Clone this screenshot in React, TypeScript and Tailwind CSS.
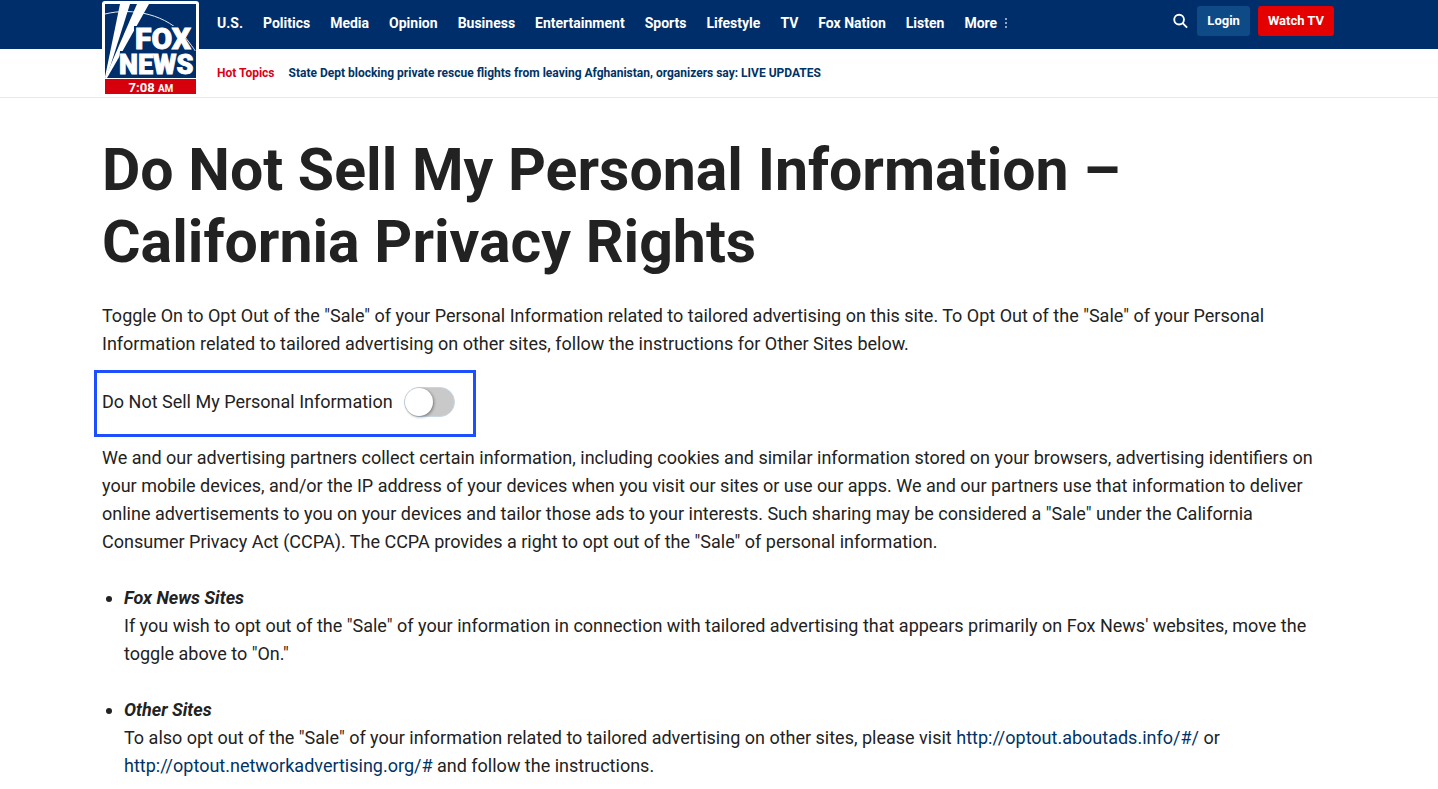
import { useState } from "react";

const NAV_LINKS = [
  "U.S.",
  "Politics",
  "Media",
  "Opinion",
  "Business",
  "Entertainment",
  "Sports",
  "Lifestyle",
  "TV",
  "Fox Nation",
  "Listen",
];

export default function App() {
  return (
    <div className="min-h-screen bg-white font-['Roboto',sans-serif] text-[#222]">
      <Header />
      <main className="mx-auto max-w-[1234px] pt-9">
        <h1 className="text-[59px] leading-[72px] font-bold">
          Do Not Sell My Personal Information – California Privacy Rights
        </h1>
        <div className="pt-6 text-lg leading-7">
          <p>
            Toggle On to Opt Out of the "Sale" of your Personal Information
            related to tailored advertising on this site. To Opt Out of the
            "Sale" of your Personal Information related to tailored advertising
            on other sites, follow the instructions for Other Sites below.
          </p>
          <OptOutToggle />
          <p className="mt-[7px]">
            We and our advertising partners collect certain information,
            including cookies and similar information stored on your browsers,
            advertising identifiers on your mobile devices, and/or the IP
            address of your devices when you visit our sites or use our apps. We
            and our partners use that information to deliver online
            advertisements to you on your devices and tailor those ads to your
            interests. Such sharing may be considered a "Sale" under the
            California Consumer Privacy Act (CCPA). The CCPA provides a right to
            opt out of the "Sale" of personal information.
          </p>
          <ul className="list-disc pl-[22px]">
            <li className="pt-7">
              <strong className="block italic">Fox News Sites</strong>
              If you wish to opt out of the "Sale" of your information in
              connection with tailored advertising that appears primarily on Fox
              News' websites, move the toggle above to "On."
            </li>
            <li className="pt-7">
              <strong className="block italic">Other Sites</strong>
              To also opt out of the "Sale" of your information related to
              tailored advertising on other sites, please visit{" "}
              <a href="#aboutads" className="text-[#003366]">
                http://optout.aboutads.info/#/
              </a>{" "}
              or{" "}
              <a href="#networkadvertising" className="text-[#003366]">
                http://optout.networkadvertising.org/#
              </a>{" "}
              and follow the instructions.
            </li>
          </ul>
        </div>
      </main>
    </div>
  );
}

function Header() {
  return (
    <header className="relative border-b border-[#dfe9f2]">
      <div className="bg-[#002e6a]">
        <div className="mx-auto flex h-[49px] max-w-[1234px] items-start pr-0.5 pl-[115px]">
          <nav className="flex h-[46px] items-center gap-5 text-sm font-bold whitespace-nowrap text-white">
            {NAV_LINKS.map((label) => (
              <a key={label} href="#nav" className="hover:underline">
                {label}
              </a>
            ))}
            <button type="button" className="flex items-center gap-2">
              More
              <svg width="2" height="10" viewBox="0 0 2 10" fill="#8fa6c6">
                <rect width="2" height="2" />
                <rect y="4" width="2" height="2" />
                <rect y="8" width="2" height="2" />
              </svg>
            </button>
          </nav>
          <div className="mt-1.5 ml-auto flex items-center gap-2 text-[13px] font-bold whitespace-nowrap text-white">
            <button type="button" aria-label="Search" className="p-px">
              <svg width="15" height="16" viewBox="0 0 16 16" fill="none" stroke="currentColor" strokeWidth="2">
                <circle cx="6.5" cy="6.5" r="5.2" />
                <path d="M10.3 10.3 15 15" />
              </svg>
            </button>
            <button type="button" className="h-[30px] rounded-[3px] bg-[#0d4a86] px-2.5">
              Login
            </button>
            <button type="button" className="h-[30px] rounded-[3px] bg-[#e40000] px-2.5">
              Watch TV
            </button>
          </div>
        </div>
      </div>
      <div className="mx-auto flex h-12 max-w-[1234px] items-center gap-3.5 pl-[115px] text-xs font-bold text-[#003366]">
        <span className="text-[#dc0015]">Hot Topics</span>
        <a href="#hot-topic">
          State Dept blocking private rescue flights from leaving Afghanistan,
          organizers say: LIVE UPDATES
        </a>
      </div>
      <div className="pointer-events-none absolute inset-x-0 top-0">
        <div className="mx-auto max-w-[1234px]">
          <Logo />
        </div>
      </div>
    </header>
  );
}

function Logo() {
  return (
    <a
      href="#home"
      aria-label="Fox News"
      className="pointer-events-auto mt-px block w-[97px] rounded-[3px] bg-white p-[3px] pb-0"
    >
      <svg width="91" height="90" viewBox="0 0 91 90" className="block">
        <rect width="91" height="74" fill="#002e6a" />
        <path d="M0 10C28 3 63 11 80 33S90 48 91 51" fill="none" stroke="#e5ecf4" strokeWidth="1" />
        {/* searchlight beams */}
        <path d="M15 0H25L6 60 1 73H0Z" fill="#fff" />
        <path d="M32 0H44L17 48 2 74H0Z" fill="#fff" />
        {/* navy plates behind the letters */}
        <path d="M29 22H80V47H91V72H13L15 47H29Z" fill="#002e6a" />
        <g
          fill="#fff"
          stroke="#fff"
          strokeWidth="0.9"
          fontFamily="Roboto, sans-serif"
          fontWeight="900"
        >
          <text x="30" y="45" fontSize="30">
            FOX
          </text>
          <text x="14" y="70" fontSize="27">
            NEWS
          </text>
        </g>
        <rect y="74" width="91" height="1" fill="#fff" />
        <rect y="75" width="91" height="15" fill="#d6000d" />
        <text
          x="46"
          y="88"
          fill="#fff"
          fontFamily="Roboto, sans-serif"
          fontWeight="700"
          fontSize="13"
          textAnchor="middle"
        >
          7:08 <tspan fontSize="10">AM</tspan>
        </text>
      </svg>
    </a>
  );
}

function OptOutToggle() {
  const [optedOut, setOptedOut] = useState(false);

  return (
    <div className="mt-3 -ml-2 flex h-[67px] w-fit items-center border-[3px] border-[#1d4fff] pr-[18px] pb-1 pl-[5px]">
      <label htmlFor="opt-out">Do Not Sell My Personal Information</label>
      <div className="relative ml-[11px] h-[30px] w-[51px]">
        <input
          id="opt-out"
          type="checkbox"
          role="switch"
          checked={optedOut}
          onChange={(e) => setOptedOut(e.target.checked)}
          className="peer block h-full w-full cursor-pointer appearance-none rounded-full border border-[#c8d6e5] bg-[#c9c9c9] checked:bg-[#1d4fff]"
        />
        <span className="pointer-events-none absolute top-px left-px size-7 rounded-full bg-white shadow-[1px_1px_3px_rgba(0,0,0,0.4)] transition-transform peer-checked:translate-x-5" />
      </div>
    </div>
  );
}
